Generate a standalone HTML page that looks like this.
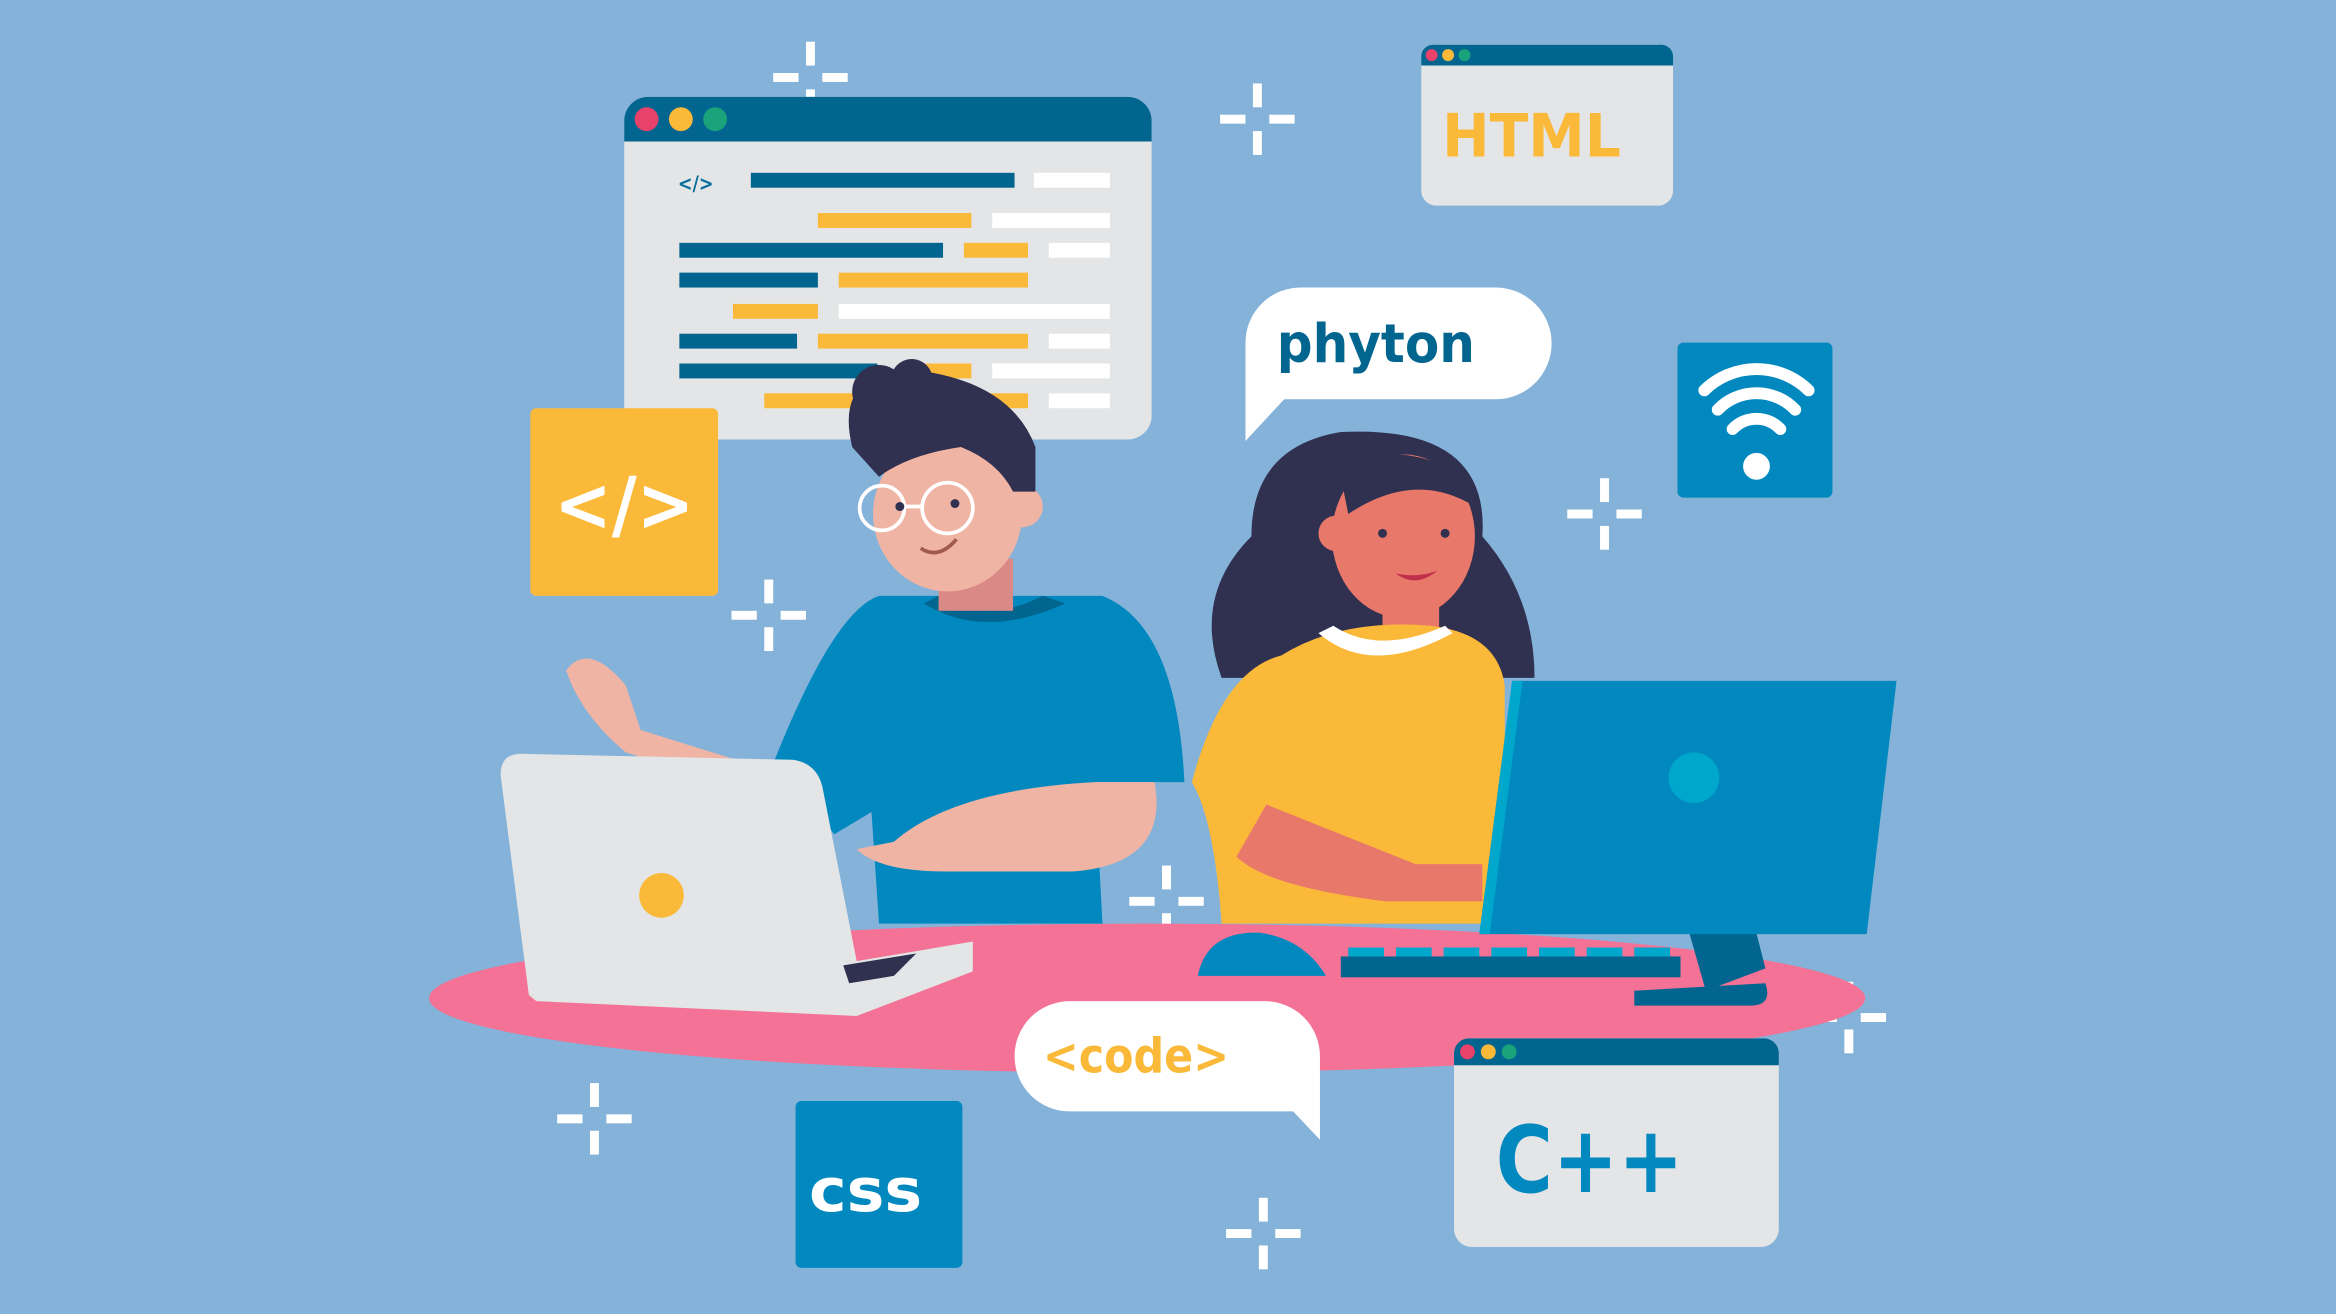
<!DOCTYPE html>
<html><head><meta charset="utf-8"><style>
html,body{margin:0;padding:0;background:#85b2d9;}
svg{display:block}
text{font-family:"DejaVu Sans","Liberation Sans",sans-serif;font-weight:bold}
</style></head><body>
<svg width="2336" height="1314" viewBox="0 0 1568 882" xmlns="http://www.w3.org/2000/svg">
<rect width="1568" height="882" fill="#85b2d9"/>
<defs>
<g id="sp" fill="#fff"><rect x="-3" y="-24" width="6" height="16"/><rect x="-3" y="8" width="6" height="16"/><rect x="-25" y="-3" width="17" height="6"/><rect x="8" y="-3" width="17" height="6"/></g>
</defs>
<use href="#sp" x="544" y="52"/><use href="#sp" x="844" y="80"/><use href="#sp" x="1077" y="345"/>
<use href="#sp" x="516" y="413"/><use href="#sp" x="399" y="751"/><use href="#sp" x="848" y="828"/>
<use href="#sp" x="1241" y="683"/><use href="#sp" x="783" y="605"/>
<rect x="419" y="65" width="354" height="230" rx="16" fill="#e4e5e6"/>
<path d="M419 95 V81 a16 16 0 0 1 16 -16 H757 a16 16 0 0 1 16 16 V95 Z" fill="#02658f"/>
<circle cx="434" cy="80" r="8" fill="#e8416a"/><circle cx="457" cy="80" r="8" fill="#fbb93a"/><circle cx="480" cy="80" r="8" fill="#1aa37a"/>
<text x="455" y="128" font-size="14" fill="#0a6f9c" textLength="24" lengthAdjust="spacingAndGlyphs">&lt;/&gt;</text>
<g>
<rect x="504" y="116" width="177" height="10" fill="#02658f"/><rect x="694" y="116" width="51" height="10" fill="#fff"/>
<rect x="549" y="143" width="103" height="10" fill="#fbb93a"/><rect x="666" y="143" width="79" height="10" fill="#fff"/>
<rect x="456" y="163" width="177" height="10" fill="#02658f"/><rect x="647" y="163" width="43" height="10" fill="#fbb93a"/><rect x="704" y="163" width="41" height="10" fill="#fff"/>
<rect x="456" y="183" width="93" height="10" fill="#02658f"/><rect x="563" y="183" width="127" height="10" fill="#fbb93a"/>
<rect x="492" y="204" width="57" height="10" fill="#fbb93a"/><rect x="563" y="204" width="182" height="10" fill="#fff"/>
<rect x="456" y="224" width="79" height="10" fill="#02658f"/><rect x="549" y="224" width="141" height="10" fill="#fbb93a"/><rect x="704" y="224" width="41" height="10" fill="#fff"/>
<rect x="456" y="244" width="133" height="10" fill="#02658f"/><rect x="603" y="244" width="49" height="10" fill="#fbb93a"/><rect x="666" y="244" width="79" height="10" fill="#fff"/>
<rect x="513" y="264" width="177" height="10" fill="#fbb93a"/><rect x="704" y="264" width="41" height="10" fill="#fff"/>
</g>
<rect x="954" y="30" width="169" height="108" rx="10" fill="#e4e5e6"/>
<path d="M954 44 V38 a8 8 0 0 1 8 -8 H1115 a8 8 0 0 1 8 8 V44 Z" fill="#02658f"/>
<circle cx="961" cy="37" r="4" fill="#e8416a"/><circle cx="972" cy="37" r="4" fill="#fbb93a"/><circle cx="983" cy="37" r="4" fill="#1aa37a"/>
<text x="968" y="105" font-size="40" fill="#fbb93a" textLength="120" lengthAdjust="spacingAndGlyphs">HTML</text>
<path d="M874 193 H1004 a37 37 0 0 1 0 75 H862 L836 296 V230 a37 37 0 0 1 38 -37Z" fill="#fff"/>
<text x="857" y="243" font-size="36" fill="#02658f" textLength="133" lengthAdjust="spacingAndGlyphs">phyton</text>
<rect x="1126" y="230" width="104" height="104" rx="4" fill="#0088bf"/>
<g fill="none" stroke="#fff" stroke-width="8" stroke-linecap="round">
<path d="M1144 262 a50 50 0 0 1 70 0"/><path d="M1153 275 a36 36 0 0 1 52 0"/><path d="M1163 288 a22 22 0 0 1 32 0"/></g>
<circle cx="1179" cy="313" r="9" fill="#fff"/>
<rect x="356" y="274" width="126" height="126" rx="4" fill="#fbb93a"/>
<text x="372" y="356" font-size="50" fill="#fff" textLength="94" lengthAdjust="spacingAndGlyphs">&lt;/&gt;</text>
<ellipse cx="770" cy="670" rx="482" ry="50" fill="#f37295"/>
<path d="M590 400 L740 400 Q790 420 795 525 L735 525 L740 620 L590 620 L585 545 L560 560 L520 510 Q560 410 590 400Z" fill="#0088bf"/>
<path d="M620 405 Q660 430 715 405 L700 400 Q660 420 630 400Z" fill="#02658f"/>
<rect x="630" y="375" width="50" height="35" fill="#d98a86"/>
<ellipse cx="636" cy="345" rx="50" ry="52" fill="#f0b4a4"/>
<circle cx="686" cy="340" r="14" fill="#f0b4a4"/>
<path d="M572 300 Q560 250 610 250 Q612 240 625 250 Q680 260 695 300 L695 330 L680 330 Q670 310 645 300 Q610 305 590 320 Z" fill="#303050"/>
<circle cx="590" cy="263" r="18" fill="#303050"/><circle cx="612" cy="255" r="14" fill="#303050"/>
<g fill="none" stroke="#fff" stroke-width="2.5"><circle cx="592" cy="341" r="15"/><circle cx="636" cy="341" r="17"/><path d="M607 340 H619"/></g>
<circle cx="604" cy="340" r="3" fill="#303050"/><circle cx="641" cy="338" r="3" fill="#303050"/>
<path d="M618 368 Q630 376 642 362" stroke="#a05a50" stroke-width="2.5" fill="none"/>
<path d="M380 450 Q395 430 420 460 L430 490 L510 515 L500 530 L420 505 Q390 480 380 450Z" fill="#f0b4a4"/>
<path d="M600 565 Q640 530 735 525 L775 525 Q785 580 720 585 L635 585 Q590 585 575 570 Z" fill="#f0b4a4"/>
<path d="M840 360 Q840 300 900 290 Q1000 285 995 360 Q1030 400 1030 455 L820 455 Q800 400 840 360Z" fill="#303050"/>
<ellipse cx="942" cy="360" rx="48" ry="55" fill="#e8786a"/>
<circle cx="897" cy="358" r="12" fill="#e8786a"/>
<path d="M900 320 Q930 290 985 320 L990 340 Q950 315 905 345Z" fill="#303050"/>
<circle cx="928" cy="358" r="3" fill="#303050"/><circle cx="970" cy="358" r="3" fill="#303050"/>
<path d="M937 385 Q950 395 965 383 Q952 388 937 385Z" fill="#c0304a"/>
<rect x="928" y="395" width="38" height="35" fill="#e8786a"/>
<path d="M860 440 Q900 415 960 420 Q1005 425 1010 460 L1010 620 L820 620 Q815 550 800 525 Q820 450 860 440Z" fill="#fbb93a"/>
<path d="M885 425 Q920 455 975 425 L970 420 Q925 440 895 420Z" fill="#fff"/>
<path d="M850 540 Q900 560 950 580 L995 580 L995 605 L930 605 Q850 595 830 575Z" fill="#e8786a"/>
<path d="M336 520 Q336 505 352 506 L532 510 Q548 512 552 528 L576 650 L355 668 Z" fill="#e4e5e6"/>
<path d="M355 668 L576 645 L653 632 L653 652 L575 682 L360 672Z" fill="#e4e5e6"/>
<path d="M566 648 L615 640 L600 655 L570 660Z" fill="#303050"/>
<circle cx="444" cy="601" r="15" fill="#fbb93a"/>
<path d="M1115 560 L1162 560 L1185 650 L1145 665Z" fill="#02658f"/>
<path d="M1097 665 L1185 660 Q1190 675 1175 675 L1097 675Z" fill="#02658f"/>
<path d="M1015 457 L1273 457 L1253 627 L993 627Z" fill="#0088bf"/>
<path d="M1015 457 L1022 457 L1000 627 L993 627Z" fill="#00a7cc"/>
<circle cx="1137" cy="522" r="17" fill="#00a7cc"/>
<rect x="900" y="642" width="228" height="14" fill="#02658f"/>
<g fill="#00a7cc"><rect x="905" y="636" width="24" height="6"/><rect x="937" y="636" width="24" height="6"/><rect x="969" y="636" width="24" height="6"/><rect x="1001" y="636" width="24" height="6"/><rect x="1033" y="636" width="24" height="6"/><rect x="1065" y="636" width="24" height="6"/><rect x="1097" y="636" width="24" height="6"/></g>
<path d="M804 655 Q810 625 845 626 Q875 630 890 655Z" fill="#0088bf"/>
<path d="M718 672 H849 a37 37 0 0 1 37 37 V765 L868 746 H718 a37 37 0 0 1 0 -74Z" fill="#fff"/>
<text x="700" y="720" font-size="32" fill="#fbb93a" textLength="125" lengthAdjust="spacingAndGlyphs">&lt;code&gt;</text>
<rect x="534" y="739" width="112" height="112" rx="4" fill="#0088bf"/>
<text x="543" y="813" font-size="40" fill="#fff" textLength="76" lengthAdjust="spacingAndGlyphs">css</text>
<rect x="976" y="697" width="218" height="140" rx="12" fill="#e4e5e6"/>
<path d="M976 715 V707 a10 10 0 0 1 10 -10 H1184 a10 10 0 0 1 10 10 V715 Z" fill="#02658f"/>
<circle cx="985" cy="706" r="5" fill="#e8416a"/><circle cx="999" cy="706" r="5" fill="#fbb93a"/><circle cx="1013" cy="706" r="5" fill="#1aa37a"/>
<text x="1004" y="800" font-size="62" fill="#0088bf" textLength="126" lengthAdjust="spacingAndGlyphs">C++</text>
</svg>
</body></html>
